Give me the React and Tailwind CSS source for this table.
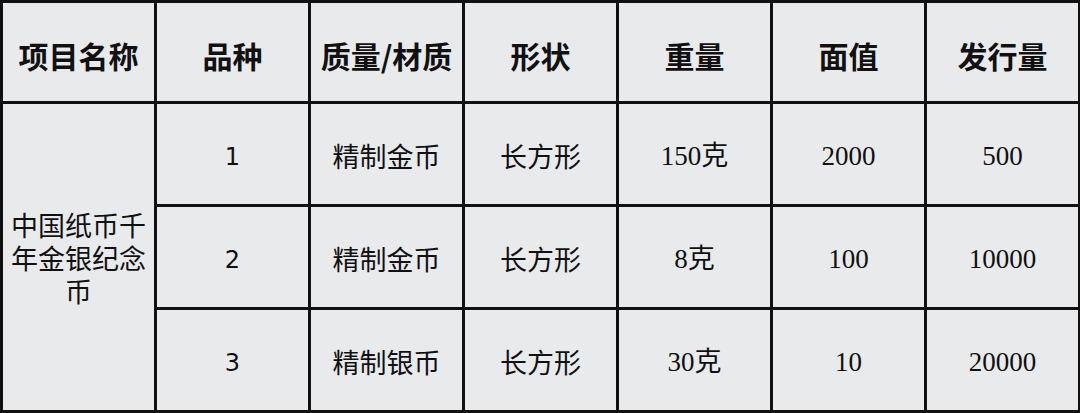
import React from "react";

const rows = [
  { no: "1", material: "精制金币", shape: "长方形", weight: "150克", value: "2000", issue: "500" },
  { no: "2", material: "精制金币", shape: "长方形", weight: "8克", value: "100", issue: "10000" },
  { no: "3", material: "精制银币", shape: "长方形", weight: "30克", value: "10", issue: "20000" },
];

const headers = ["项目名称", "品种", "质量/材质", "形状", "重量", "面值", "发行量"];

const cell = "border-[3px] border-[#111] text-center align-middle p-0";
const body = `${cell} pt-[5px]`;
const cjk = "font-['Noto_Sans_CJK_SC','Noto_Sans',sans-serif]";
const serif = "font-['Liberation_Serif','Noto_Sans_CJK_SC',serif] text-[27px]";

export default function App() {
  return (
    <div className="w-[1080px] h-[413px] bg-white overflow-hidden">
      <table className="table-fixed border-collapse w-[1078px] bg-[#e9eaec] text-[#111]">
        <colgroup>
          {headers.map((h) => (
            <col key={h} className="w-[154px]" />
          ))}
        </colgroup>
        <thead>
          <tr className="h-[101px]">
            {headers.map((h) => (
              <th key={h} className={`${cell} ${cjk} text-[30px] font-bold pt-[6px]`}>
                {h}
              </th>
            ))}
          </tr>
        </thead>
        <tbody>
          {rows.map((r, i) => (
            <tr key={r.no} className="h-[103px]">
              {i === 0 && (
                <td rowSpan={3} className={`${cell} ${cjk} text-[27px] leading-[33px] px-[4px]`}>
                  中国纸币千年金银纪念币
                </td>
              )}
              <td className={`${body} font-['DejaVu_Sans',sans-serif] text-[24px]`}>{r.no}</td>
              <td className={`${body} ${cjk} text-[27px]`}>{r.material}</td>
              <td className={`${body} ${cjk} text-[27px]`}>{r.shape}</td>
              <td className={`${body} ${serif}`}>{r.weight}</td>
              <td className={`${body} ${serif}`}>{r.value}</td>
              <td className={`${body} ${serif}`}>{r.issue}</td>
            </tr>
          ))}
        </tbody>
      </table>
    </div>
  );
}
